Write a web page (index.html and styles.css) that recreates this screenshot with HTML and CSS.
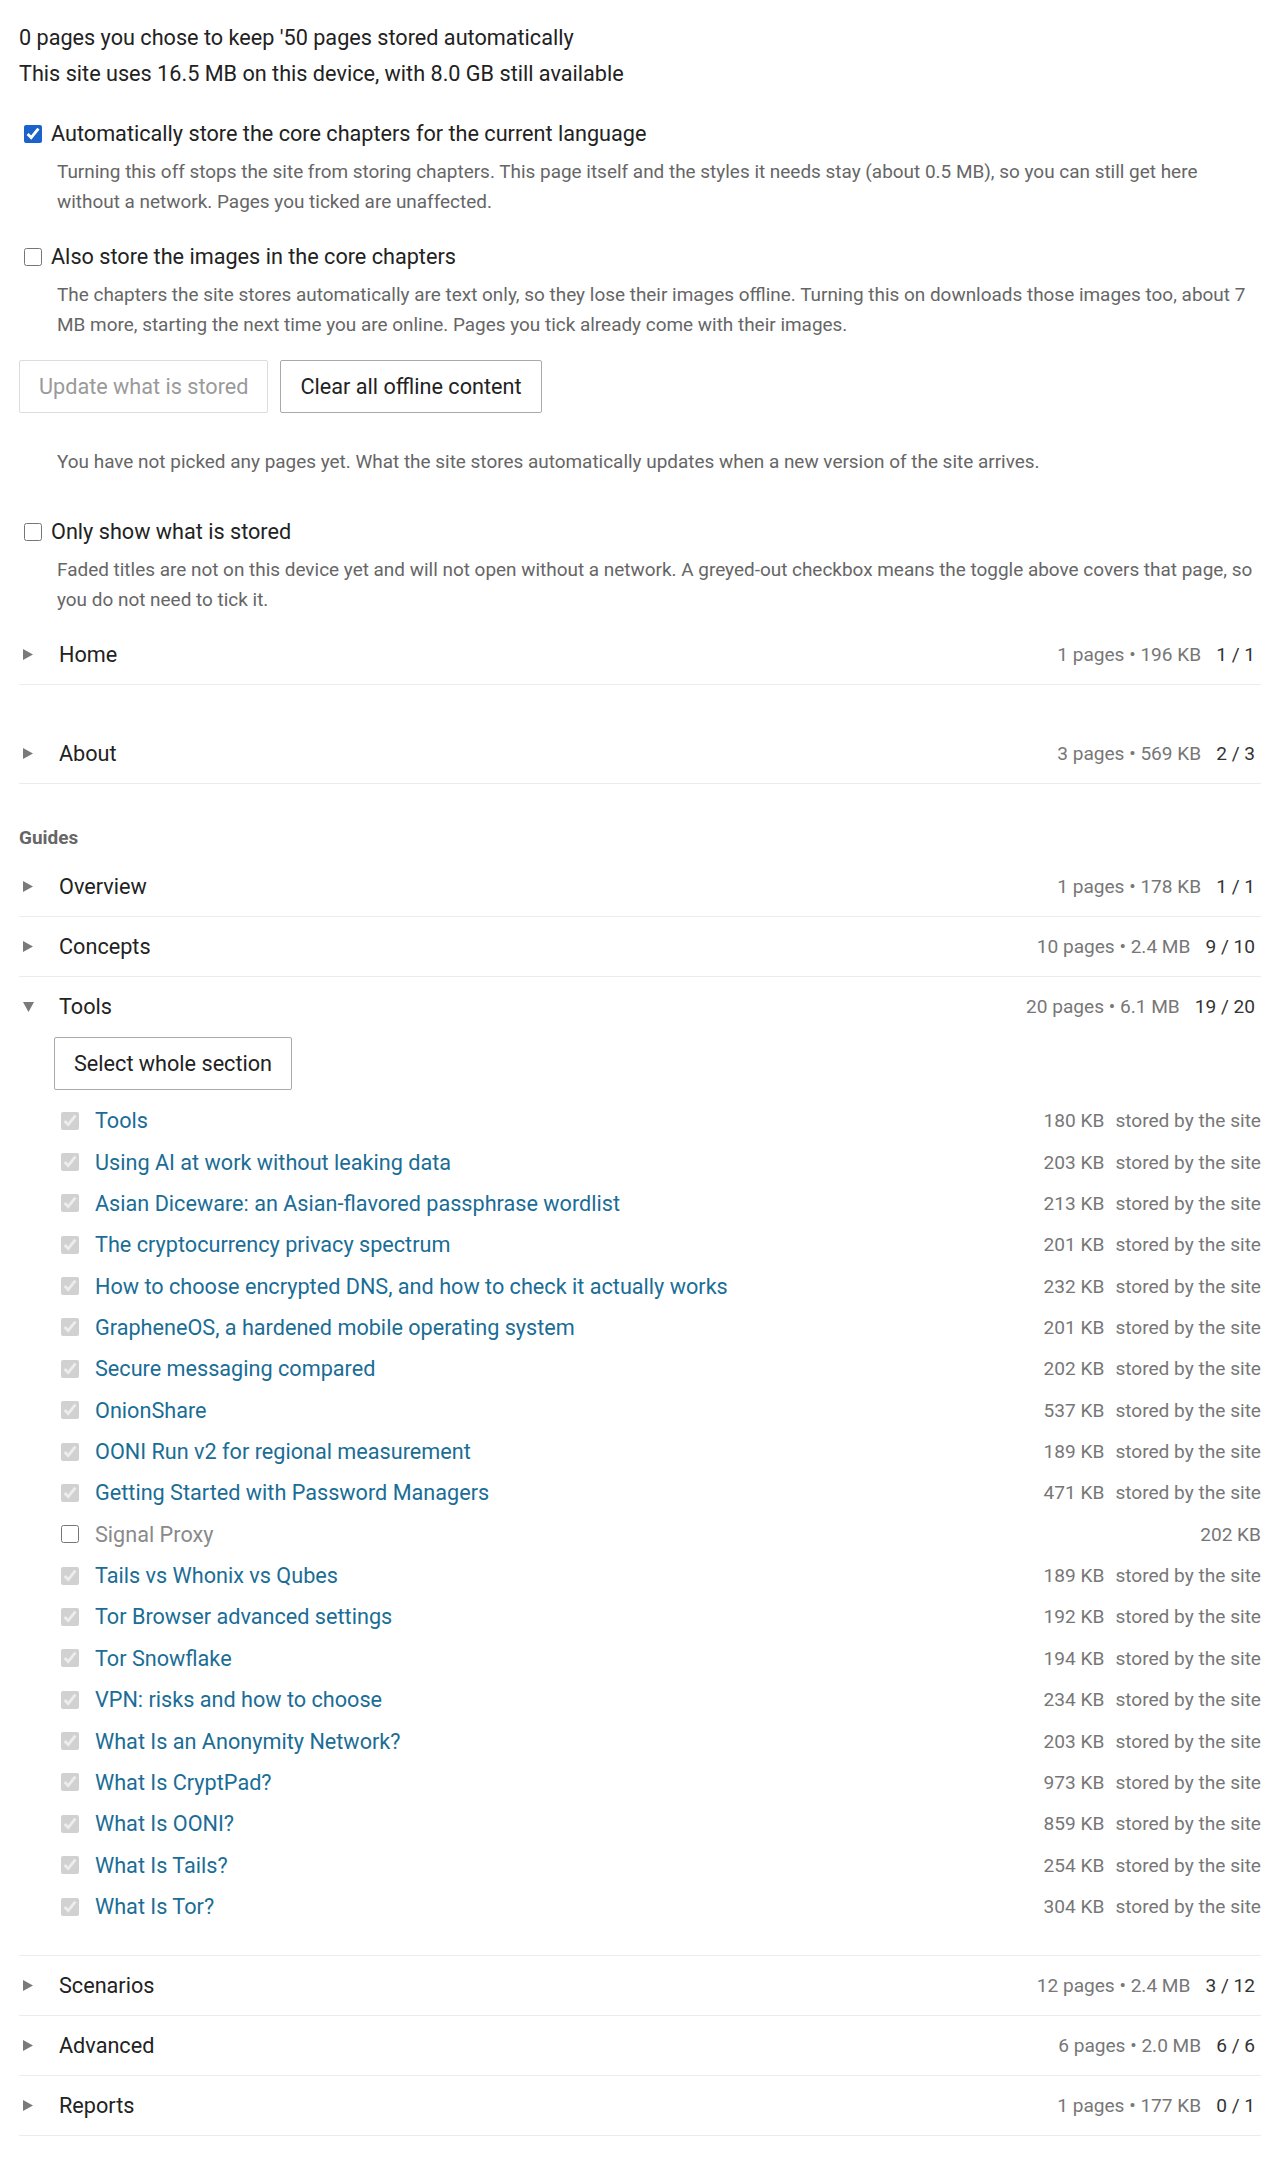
FILE: index.html
```html
<!DOCTYPE html>
<html lang="en">
<head>
<meta charset="utf-8">
<title>Offline content</title>
<link rel="stylesheet" href="styles.css">
</head>
<body>
<div class="page">
  <div class="intro">
    <p>0 pages you chose to keep ′50 pages stored automatically</p>
    <p>This site uses 16.5 MB on this device, with 8.0 GB still available</p>
  </div>

  <div class="option opt-first">
    <label class="opt-label"><input type="checkbox" class="cb cb-accent" checked><span>Automatically store the core chapters for the current language</span></label>
    <p class="desc">Turning this off stops the site from storing chapters. This page itself and the styles it needs stay (about 0.5 MB), so you can still get here without a network. Pages you ticked are unaffected.</p>
  </div>

  <div class="option opt-second">
    <label class="opt-label"><input type="checkbox" class="cb"><span>Also store the images in the core chapters</span></label>
    <p class="desc">The chapters the site stores automatically are text only, so they lose their images offline. Turning this on downloads those images too, about 7 MB more, starting the next time you are online. Pages you tick already come with their images.</p>
  </div>

  <div class="actions">
    <button class="btn" disabled>Update what is stored</button>
    <button class="btn">Clear all offline content</button>
  </div>

  <p class="desc note">You have not picked any pages yet. What the site stores automatically updates when a new version of the site arrives.</p>

  <div class="option opt-third">
    <label class="opt-label"><input type="checkbox" class="cb"><span>Only show what is stored</span></label>
    <p class="desc">Faded titles are not on this device yet and will not open without a network. A greyed-out checkbox means the toggle above covers that page, so you do not need to tick it.</p>
  </div>

  <div class="groups">
    <section class="group">
      <details class="sec">
        <summary class="sec-head"><svg class="tri" width="10" height="11" viewBox="0 0 10 11"><polygon points="0,0 10,5.5 0,11"/></svg><span class="sec-title">Home</span><span class="sec-meta">1 pages • 196 KB</span><span class="sec-count">1 / 1</span></summary>
      </details>
    </section>

    <section class="group">
      <details class="sec">
        <summary class="sec-head"><svg class="tri" width="10" height="11" viewBox="0 0 10 11"><polygon points="0,0 10,5.5 0,11"/></svg><span class="sec-title">About</span><span class="sec-meta">3 pages • 569 KB</span><span class="sec-count">2 / 3</span></summary>
      </details>
    </section>

    <section class="group">
      <h3 class="group-title">Guides</h3>
      <details class="sec">
        <summary class="sec-head"><svg class="tri" width="10" height="11" viewBox="0 0 10 11"><polygon points="0,0 10,5.5 0,11"/></svg><span class="sec-title">Overview</span><span class="sec-meta">1 pages • 178 KB</span><span class="sec-count">1 / 1</span></summary>
      </details>
      <details class="sec">
        <summary class="sec-head"><svg class="tri" width="10" height="11" viewBox="0 0 10 11"><polygon points="0,0 10,5.5 0,11"/></svg><span class="sec-title">Concepts</span><span class="sec-meta">10 pages • 2.4 MB</span><span class="sec-count">9 / 10</span></summary>
      </details>
      <details class="sec" open>
        <summary class="sec-head"><svg class="tri tri-open" width="11" height="10" viewBox="0 0 11 10"><polygon points="0,0 11,0 5.5,10"/></svg><span class="sec-title">Tools</span><span class="sec-meta">20 pages • 6.1 MB</span><span class="sec-count">19 / 20</span></summary>
        <div class="panel">
          <button class="btn btn-section">Select whole section</button>
          <ul class="items">
            <li class="item"><input type="checkbox" class="cb" checked disabled><a class="item-title" href="#">Tools</a><span class="item-size">180 KB</span><span class="item-status">stored by the site</span></li>
            <li class="item"><input type="checkbox" class="cb" checked disabled><a class="item-title" href="#">Using AI at work without leaking data</a><span class="item-size">203 KB</span><span class="item-status">stored by the site</span></li>
            <li class="item"><input type="checkbox" class="cb" checked disabled><a class="item-title" href="#">Asian Diceware: an Asian-flavored passphrase wordlist</a><span class="item-size">213 KB</span><span class="item-status">stored by the site</span></li>
            <li class="item"><input type="checkbox" class="cb" checked disabled><a class="item-title" href="#">The cryptocurrency privacy spectrum</a><span class="item-size">201 KB</span><span class="item-status">stored by the site</span></li>
            <li class="item"><input type="checkbox" class="cb" checked disabled><a class="item-title" href="#">How to choose encrypted DNS, and how to check it actually works</a><span class="item-size">232 KB</span><span class="item-status">stored by the site</span></li>
            <li class="item"><input type="checkbox" class="cb" checked disabled><a class="item-title" href="#">GrapheneOS, a hardened mobile operating system</a><span class="item-size">201 KB</span><span class="item-status">stored by the site</span></li>
            <li class="item"><input type="checkbox" class="cb" checked disabled><a class="item-title" href="#">Secure messaging compared</a><span class="item-size">202 KB</span><span class="item-status">stored by the site</span></li>
            <li class="item"><input type="checkbox" class="cb" checked disabled><a class="item-title" href="#">OnionShare</a><span class="item-size">537 KB</span><span class="item-status">stored by the site</span></li>
            <li class="item"><input type="checkbox" class="cb" checked disabled><a class="item-title" href="#">OONI Run v2 for regional measurement</a><span class="item-size">189 KB</span><span class="item-status">stored by the site</span></li>
            <li class="item"><input type="checkbox" class="cb" checked disabled><a class="item-title" href="#">Getting Started with Password Managers</a><span class="item-size">471 KB</span><span class="item-status">stored by the site</span></li>
            <li class="item"><input type="checkbox" class="cb"><span class="item-title item-faded">Signal Proxy</span><span class="item-size">202 KB</span></li>
            <li class="item"><input type="checkbox" class="cb" checked disabled><a class="item-title" href="#">Tails vs Whonix vs Qubes</a><span class="item-size">189 KB</span><span class="item-status">stored by the site</span></li>
            <li class="item"><input type="checkbox" class="cb" checked disabled><a class="item-title" href="#">Tor Browser advanced settings</a><span class="item-size">192 KB</span><span class="item-status">stored by the site</span></li>
            <li class="item"><input type="checkbox" class="cb" checked disabled><a class="item-title" href="#">Tor Snowflake</a><span class="item-size">194 KB</span><span class="item-status">stored by the site</span></li>
            <li class="item"><input type="checkbox" class="cb" checked disabled><a class="item-title" href="#">VPN: risks and how to choose</a><span class="item-size">234 KB</span><span class="item-status">stored by the site</span></li>
            <li class="item"><input type="checkbox" class="cb" checked disabled><a class="item-title" href="#">What Is an Anonymity Network?</a><span class="item-size">203 KB</span><span class="item-status">stored by the site</span></li>
            <li class="item"><input type="checkbox" class="cb" checked disabled><a class="item-title" href="#">What Is CryptPad?</a><span class="item-size">973 KB</span><span class="item-status">stored by the site</span></li>
            <li class="item"><input type="checkbox" class="cb" checked disabled><a class="item-title" href="#">What Is OONI?</a><span class="item-size">859 KB</span><span class="item-status">stored by the site</span></li>
            <li class="item"><input type="checkbox" class="cb" checked disabled><a class="item-title" href="#">What Is Tails?</a><span class="item-size">254 KB</span><span class="item-status">stored by the site</span></li>
            <li class="item"><input type="checkbox" class="cb" checked disabled><a class="item-title" href="#">What Is Tor?</a><span class="item-size">304 KB</span><span class="item-status">stored by the site</span></li>
          </ul>
        </div>
      </details>
      <details class="sec">
        <summary class="sec-head"><svg class="tri" width="10" height="11" viewBox="0 0 10 11"><polygon points="0,0 10,5.5 0,11"/></svg><span class="sec-title">Scenarios</span><span class="sec-meta">12 pages • 2.4 MB</span><span class="sec-count">3 / 12</span></summary>
      </details>
      <details class="sec">
        <summary class="sec-head"><svg class="tri" width="10" height="11" viewBox="0 0 10 11"><polygon points="0,0 10,5.5 0,11"/></svg><span class="sec-title">Advanced</span><span class="sec-meta">6 pages • 2.0 MB</span><span class="sec-count">6 / 6</span></summary>
      </details>
      <details class="sec">
        <summary class="sec-head"><svg class="tri" width="10" height="11" viewBox="0 0 10 11"><polygon points="0,0 10,5.5 0,11"/></svg><span class="sec-title">Reports</span><span class="sec-meta">1 pages • 177 KB</span><span class="sec-count">0 / 1</span></summary>
      </details>
    </section>
  </div>
</div>
</body>
</html>
```

FILE: styles.css
```css
html, body {
  margin: 0;
  padding: 0;
  background: #fff;
}

body {
  font-family: "Roboto", "Liberation Sans", sans-serif;
  font-size: 21.65px;
  color: #222;
}

.page {
  padding: 20px 19px 0 19px;
}

.intro p {
  margin: 0;
  line-height: 36px;
}

.option {
  margin-top: 24px;
}

.opt-second {
  margin-top: 22px;
}

.opt-third {
  margin-top: 37px;
}

.opt-label {
  display: flex;
  align-items: center;
  gap: 9px;
  line-height: 36px;
}

.cb {
  width: 18px;
  height: 18px;
  margin: 0;
  flex: none;
}

.opt-label .cb {
  margin-left: 5px;
}

.cb-accent {
  accent-color: #1a62cc;
}

.desc {
  margin: 5px 0 0;
  padding-left: 38px;
  font-size: 18.95px;
  line-height: 30px;
  color: #666;
}

.note {
  margin-top: 34px;
}

.actions {
  display: flex;
  gap: 12px;
  margin-top: 20px;
}

.btn {
  font-family: inherit;
  font-size: 21.65px;
  color: #222;
  background: #fff;
  border: 1px solid #a9a9a9;
  border-radius: 2px;
  height: 53px;
  padding: 0 19px;
  cursor: pointer;
}

.btn:disabled {
  color: #9a9a9a;
  border-color: #dcdcdc;
  cursor: default;
}

.groups {
  margin-top: 10px;
  display: flex;
  flex-direction: column;
  gap: 39px;
}

.group-title {
  margin: 0 0 5px;
  font-size: 18.95px;
  line-height: 29px;
  font-weight: 700;
  color: #666;
}

.sec {
  border-bottom: 1px solid #ececec;
}

.sec-head {
  display: flex;
  align-items: center;
  height: 59px;
  padding: 0 6px 0 4px;
  list-style: none;
  cursor: pointer;
}

.sec-head::-webkit-details-marker {
  display: none;
}

.tri {
  flex: none;
  fill: #7a7a7a;
  margin-right: 26px;
}

.tri-open {
  margin-right: 25px;
}

.sec-title {
  flex: 1;
}

.sec-meta,
.sec-count,
.item-size,
.item-status {
  font-size: 19.1px;
}

.sec-meta {
  color: #777;
}

.sec-count {
  color: #333;
  margin-left: 15px;
}

.panel {
  padding: 1px 0 28px 35px;
}

.btn-section {
  display: block;
  margin-bottom: 10px;
}

.items {
  list-style: none;
  margin: 0;
  padding: 0;
}

.item {
  display: flex;
  align-items: center;
  height: 41.37px;
  padding-left: 7px;
}

.item-title {
  flex: 1;
  margin-left: 16px;
  color: #1a6d96;
  text-decoration: none;
}

.item-faded {
  color: #8a8a8a;
}

.item-size {
  color: #777;
}

.item-status {
  color: #777;
  margin-left: 11px;
}
```
